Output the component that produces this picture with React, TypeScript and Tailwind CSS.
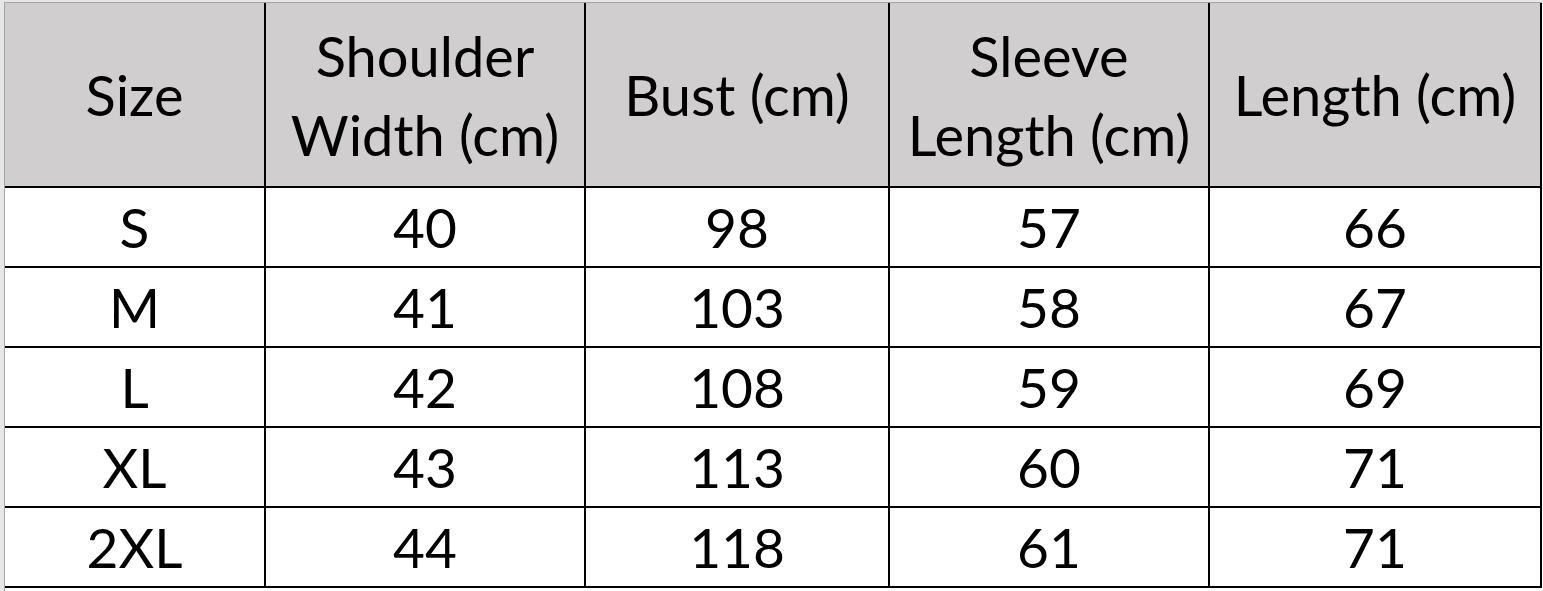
const headers = [
  ["Size"],
  ["Shoulder", "Width (cm)"],
  ["Bust (cm)"],
  ["Sleeve", "Length (cm)"],
  ["Length (cm)"],
];

const rows = [
  ["S", "40", "98", "57", "66"],
  ["M", "41", "103", "58", "67"],
  ["L", "42", "108", "59", "69"],
  ["XL", "43", "113", "60", "71"],
  ["2XL", "44", "118", "61", "71"],
];

export default function App() {
  return (
    <div
      className="w-[1543px] h-[591px] bg-white overflow-hidden"
      style={{ fontFamily: "Lato, 'Open Sans', sans-serif" }}
    >
      {/* sheet gutter */}
      <div className="h-[2px] bg-[#e6e6e6]" />
      <div className="flex">
        <div className="w-[4px] h-[589px] bg-[#e6e6e6]" />
        <div className="w-[1px] h-[589px] bg-[#a6a6a6]" />
        <div className="flex flex-col">
          <div className="h-[1px] bg-[#a6a6a6]" />
          <div className="grid grid-cols-[259px_318px_302px_318px_330px] grid-rows-[183px_78px_78px_78px_78px_78px] gap-[2px] bg-black pr-[2px] pb-[2px]">
            {headers.map((h, i) => (
              <div
                key={i}
                className="bg-[#d0cece] flex flex-col items-center justify-center text-[56px] leading-[79px] text-black"
              >
                {h.map((line) => (
                  <span key={line}>{line}</span>
                ))}
              </div>
            ))}
            {rows.map((r, ri) =>
              r.map((c, ci) => (
                <div
                  key={`${ri}-${ci}`}
                  className="bg-white flex items-center justify-center text-[55px] text-black"
                >
                  {c}
                </div>
              ))
            )}
          </div>
        </div>
      </div>
    </div>
  );
}
